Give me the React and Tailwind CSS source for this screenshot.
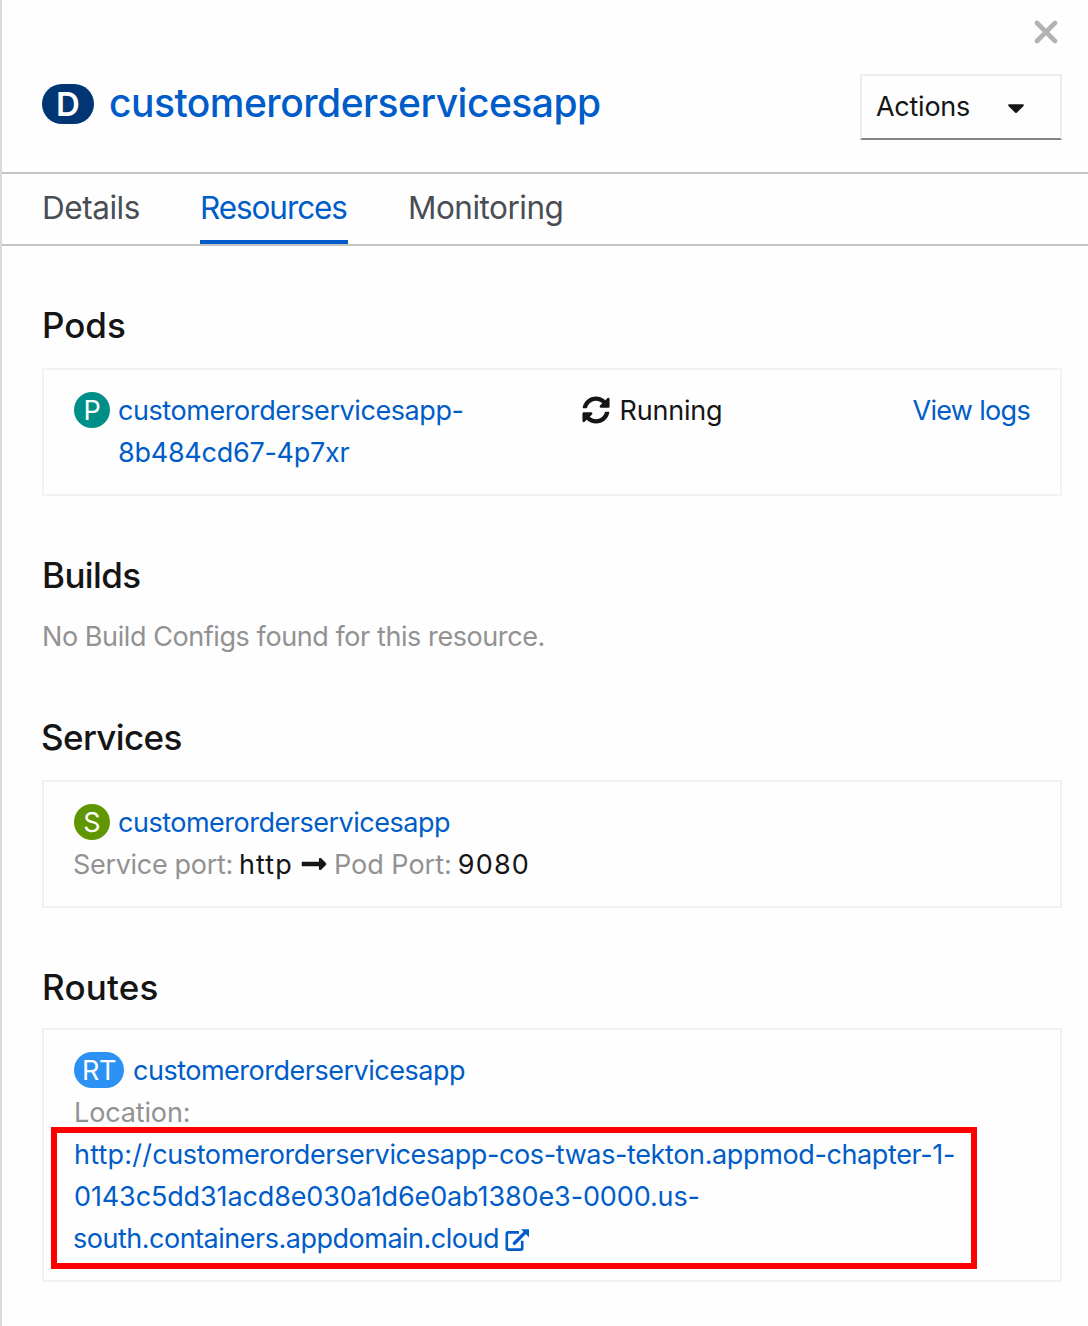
import React from "react";
import { FaCaretDown, FaSyncAlt, FaLongArrowAltRight } from "react-icons/fa";

function CloseIcon({ className }) {
  return (
    <svg className={className} viewBox="0 0 24 24" fill="none" stroke="currentColor" strokeWidth="4.6" strokeLinecap="round">
      <path d="M3 3 21 21M21 3 3 21" />
    </svg>
  );
}

function ExternalLinkIcon({ className }) {
  return (
    <svg className={className} viewBox="0 0 24 22" fill="none">
      <path d="M14 3.4H3.2a1.4 1.4 0 0 0-1.4 1.4v14.4a1.4 1.4 0 0 0 1.4 1.4h12.6a1.4 1.4 0 0 0 1.4-1.4v-7.4" stroke="currentColor" strokeWidth="2.6" />
      <path d="M9.4 14.2 20 3.6" stroke="currentColor" strokeWidth="3.4" strokeLinecap="round" />
      <path d="M16 0.2H24v8z" fill="currentColor" />
    </svg>
  );
}

function Heading({ className, children }) {
  return <h2 className={`h-10 text-[35px] leading-10 font-medium ${className}`}>{children}</h2>;
}

function Card({ className, children }) {
  return (
    <div className={`border-2 border-[#f2f2f2] px-[30px] py-5 ${className}`}>{children}</div>
  );
}

function Badge({ className, children }) {
  return (
    <span className={`mt-0.5 flex h-9 shrink-0 items-center justify-center rounded-full pt-px text-[27px] leading-9 text-white ${className}`}>
      {children}
    </span>
  );
}

export default function App() {
  return (
    <div className="flex h-[1326px] w-[1088px] flex-col overflow-hidden border-l-2 border-[#d9d9d9] bg-[#fefefe] font-['Inter',sans-serif] text-[27px] leading-[42px] text-[#151515] [font-feature-settings:'calt'_0]">
      <header className="flex h-[174px] flex-col border-b-2 border-[#c4c4c4]">
        <div className="flex h-[74px] justify-end pt-5 pr-[30px]">
          <CloseIcon className="h-6 w-6 text-[#b3b3b3]" />
        </div>
        <div className="flex justify-between pr-[26px] pl-10">
          <h1 className="flex h-[60px] items-center">
            <span className="flex h-10 w-[52px] items-center justify-center rounded-full bg-[#003674] text-[33px] leading-10 font-semibold text-white">
              D
            </span>
            <span className="ml-[15px] h-[60px] text-[39px] leading-[57px] font-medium tracking-[-0.514px] text-[#005cc8]">
              customerorderservicesapp
            </span>
          </h1>
          <button className="flex h-[66px] w-[202px] items-center justify-between border-2 border-[#ededed] border-b-[#808387] pr-[35px] pl-3.5 tracking-[-0.26px]">
            Actions
            <FaCaretDown className="h-[27px] w-[18px]" />
          </button>
        </div>
      </header>

      <nav className="flex h-[72px] gap-[60px] border-b-2 border-[#c4c4c4] pl-10 text-[31.5px] text-[#4a4d54]">
        <span className="h-[70px] w-[98px] pt-[13px] tracking-[-0.45px]">Details</span>
        <span className="h-[70px] w-[148px] border-b-4 border-[#005cc8] pt-[13px] tracking-[-1.08px] text-[#005cc8]">
          Resources
        </span>
        <span className="h-[70px] pt-[13px] tracking-[-0.5px]">Monitoring</span>
      </nav>

      <main className="pr-[26px] pl-10">
        <Heading className="mt-[59px]">Pods</Heading>
        <Card className="mt-[23px] flex h-32">
          <Badge className="w-9 bg-[#008f88]">P</Badge>
          <div className="ml-2 text-[#005cc8]">
            <div className="tracking-[-0.429px]">customerorderservicesapp-</div>
            <div className="tracking-[-0.265px]">8b484cd67-4p7xr</div>
          </div>
          <div className="ml-[119px] flex h-[42px] items-center">
            <FaSyncAlt className="mb-0.5 h-7 w-7" />
            <span className="ml-[9px] tracking-[-0.2px]">Running</span>
          </div>
          <span className="ml-auto tracking-[-0.675px] text-[#005cc8]">View logs</span>
        </Card>

        <Heading className="mt-[59px] tracking-[-0.6px]">Builds</Heading>
        <p className="mt-[21px] tracking-[-0.42px] text-[#929292]">No Build Configs found for this resource.</p>

        <Heading className="-ml-px mt-[59px] tracking-[-0.635px]">Services</Heading>
        <Card className="mt-[23px] h-32">
          <div className="flex">
            <Badge className="w-9 bg-[#609700]">S</Badge>
            <span className="ml-2 tracking-[-0.489px] text-[#005cc8]">customerorderservicesapp</span>
          </div>
          <div className="-ml-px flex items-center">
            <span className="tracking-[-0.314px] text-[#929292]">Service port:</span>
            <span className="ml-1.5 tracking-[1.1px]">http</span>
            <FaLongArrowAltRight className="mb-0.5 ml-2 h-7 w-[26px]" />
            <span className="ml-[7px] text-[#929292]">Pod Port:</span>
            <span className="ml-1.5 tracking-[1.17px]">9080</span>
          </div>
        </Card>

        <Heading className="mt-[59px] tracking-[0.2px]">Routes</Heading>
        <Card className="relative mt-[21px] h-[254px]">
          <div className="flex">
            <Badge className="w-[50px] bg-[#2b91f3] tracking-[-0.5px]">RT</Badge>
            <span className="ml-[9px] tracking-[-0.489px] text-[#005cc8]">customerorderservicesapp</span>
          </div>
          <div className="tracking-[-0.14px] text-[#929292]">Location:</div>
          <div className="whitespace-nowrap text-[#005cc8]">
            <div>
              <span className="tracking-[0.2px]">http://</span>
              <span className="tracking-[-0.375px]">customerorderservicesapp-cos-twas-tekton.appmod-chapter-1-</span>
            </div>
            <div className="tracking-[-0.127px]">0143c5dd31acd8e030a1d6e0ab1380e3-0000.us-</div>
            <div className="-ml-px flex items-center tracking-[-0.492px]">
              south.containers.appdomain.cloud
              <ExternalLinkIcon className="mt-0.5 ml-1.5 h-[22px] w-6" />
            </div>
          </div>
          <div className="absolute top-[97px] left-[7px] h-[142px] w-[926px] border-6 border-[#ff0000]" />
        </Card>
      </main>
    </div>
  );
}
